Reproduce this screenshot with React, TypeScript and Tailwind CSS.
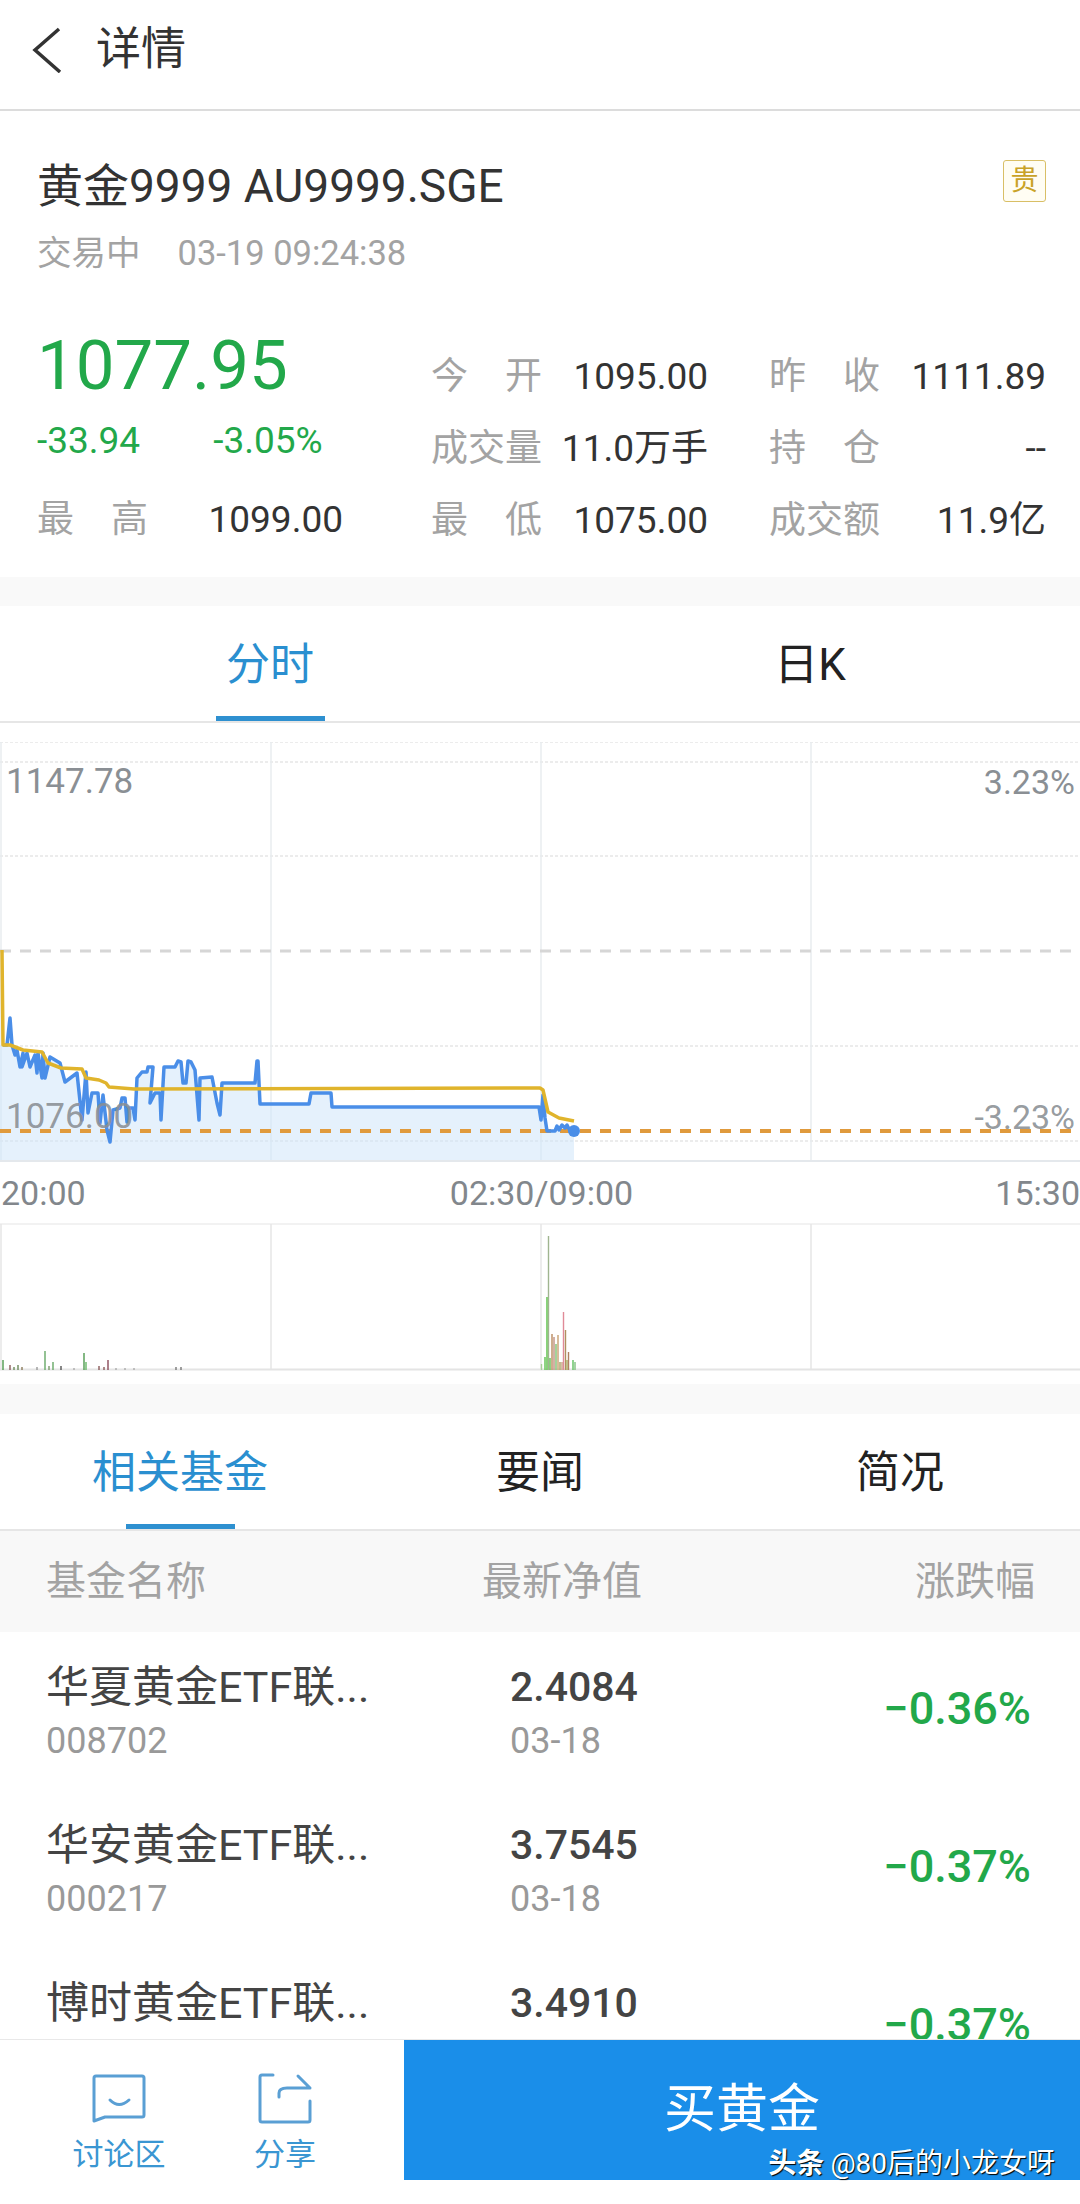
const BLUE: [number, number][] = [
  [3,1045],[7,1045],[10,1018],[12,1045],[15,1055],[17,1050],[20,1067],[23,1053],[22,1067],[27,1053],[30,1067],[35,1055],[37,1073],[38,1053],[42,1078],[43,1053],[45,1078],[50,1057],[60,1063],[65,1082],[77,1073],[82,1120],[86,1072],[88,1113],[92,1093],[98,1093],[100,1123],[103,1095],[107,1130],[110,1142],[113,1110],[120,1108],[122,1098],[125,1098],[127,1122],[128,1108],[133,1108],[135,1120],[137,1078],[142,1072],[147,1072],[148,1067],[153,1067],[150,1103],[155,1093],[160,1093],[161,1120],[164,1067],[175,1067],[178,1061],[181,1062],[183,1083],[186,1083],[188,1061],[191,1062],[195,1070],[199,1120],[200,1078],[212,1077],[217,1103],[220,1115],[222,1083],[255,1083],[257,1061],[258,1061],[260,1104],[309,1104],[311,1093],[331,1093],[332,1107],[539,1107],[541,1120],[543,1095],[545,1118],[547,1131],[555,1131],[557,1126],[559,1130],[562,1125],[565,1128],[567,1125],[570,1131],[574,1131],
];
const YELLOW: [number, number][] = [
  [2,950],[3,1045],[10,1045],[23,1050],[42,1052],[48,1063],[61,1068],[82,1069],[86,1078],[99,1080],[106,1083],[109,1087],[134,1089],[540,1088],[543,1090],[548,1112],[559,1118],[574,1121],
];
const BARS: [number, number, string][] = [
  [3,1360,"#4f9a4f"],[10,1365,"#8a5a5a"],[14,1367,"#6a8a5a"],[18,1365,"#6a8a5a"],[22,1367,"#8a7a5a"],[37,1367,"#999"],[45,1351,"#66a866"],[49,1366,"#7a9a6a"],[53,1362,"#66a866"],[61,1366,"#555"],[74,1368,"#aaa"],[84,1353,"#4f9a4f"],[86,1362,"#66b866"],[99,1366,"#8a5a5a"],[104,1367,"#8a5a5a"],[108,1360,"#8a4a5a"],[116,1368,"#aaa"],[125,1368,"#aaa"],[134,1368,"#aaa"],[176,1367,"#777"],[181,1367,"#777"],
  [541.5,1364,"#a8cf9a"],[545,1357,"#5fc14f"],[547,1297,"#55c040"],[548.5,1236,"#9fb58f"],[550,1358,"#5fc14f"],[552,1334,"#b98a5f"],[554,1337,"#c09080"],[556,1344,"#7fbf6f"],[558,1335,"#c8a070"],[560,1362,"#a8a060"],[562,1362,"#c8a080"],[563.5,1312,"#e08a98"],[565.5,1330,"#b09060"],[567,1360,"#a8b060"],[568.5,1352,"#b08060"],[573,1360,"#60c060"],[575,1362,"#80c080"],
];
const pts = (a: [number, number][]) => a.map((p) => p.join(",")).join(" ");

function Stat({ label, value }: { label: string[]; value: string }) {
  return (
    <div className="flex h-[72px] items-center justify-between">
      <div className="flex w-[111px] justify-between text-[37px] text-[#a3a3a3]">
        {label.map((c, i) => (
          <span key={i}>{c}</span>
        ))}
      </div>
      <span className="text-[37px] text-[#333]">{value}</span>
    </div>
  );
}

function Tab({ label, active, w }: { label: string; active?: boolean; w: string }) {
  return (
    <div className="flex flex-1 justify-center">
      <div
        className={
          w +
          " flex h-[110px] items-center justify-center border-b-[5px] pt-[2px] text-[44px] " +
          (active ? "border-[#2e90d0] text-[#2a8fd0]" : "border-transparent text-[#222]")
        }
      >
        {label}
      </div>
    </div>
  );
}

function FundRow({ name, code, value, date, pct }: { name: string; code: string; value: string; date: string; pct: string }) {
  return (
    <div className="flex h-[158px] shrink-0 pl-[46px] pr-[49px]">
      <div className="flex w-[464px] flex-col pt-[30px]">
        <span className="h-[50px] whitespace-nowrap text-[43px] leading-[50px] text-[#444]">{name}</span>
        <span className="mt-[4px] h-[50px] text-[36px] leading-[50px] text-[#999]">{code}</span>
      </div>
      <div className="flex flex-col pt-[30px]">
        <span className="h-[50px] text-[41px] font-medium leading-[50px] text-[#444]">{value}</span>
        <span className="mt-[4px] h-[50px] text-[36px] leading-[50px] text-[#999]">{date}</span>
      </div>
      <div className="ml-auto pt-[52px] text-[45px] font-medium leading-[50px] text-[#22a84a]">{pct}</div>
    </div>
  );
}

export default function App() {
  return (
    <div className="flex h-[2204px] w-[1080px] flex-col overflow-hidden bg-white font-[Roboto,'Noto_Sans_CJK_SC',sans-serif]">
      <header className="flex h-[111px] shrink-0 items-center gap-[34px] border-b-2 border-[#dcdcdc] pb-[10px] pl-[32px]">
        <svg width="30" height="46" viewBox="0 0 30 46" fill="none" stroke="#333" strokeWidth="3.5">
          <path d="M27 2 L3 23 L28 45" />
        </svg>
        <h1 className="text-[45px] leading-none text-[#333]">详情</h1>
      </header>

      <section className="shrink-0 pb-[20px] pl-[37px] pr-[34px] pt-[50px]">
        <div className="flex h-[50px] items-start justify-between">
          <span className="text-[46px] leading-[50px] text-[#333]">黄金9999 AU9999.SGE</span>
          <span className="-mt-px flex h-[42px] w-[43px] items-center justify-center rounded-[3px] border border-[#d9bf66] bg-[#fffdf3] text-[28px] leading-none text-[#c9a227]">
            贵
          </span>
        </div>
        <div className="mt-[23px] flex h-[40px] items-center gap-[37px] text-[34.5px] text-[#a3a3a3]">
          <span>交易中</span>
          <span>03-19 09:24:38</span>
        </div>
        <div className="mt-[67px] flex">
          <div className="-mt-[11px] flex w-[306px] shrink-0 flex-col">
            <div className="h-[72px] text-[69px] font-normal leading-[72px] text-[#22a84a]">1077.95</div>
            <div className="mt-[19px] flex h-[40px] items-center gap-[73px] text-[37px] text-[#22a84a]">
              <span>-33.94</span>
              <span>-3.05%</span>
            </div>
            <div className="mt-[23px]">
              <Stat label={["最", "高"]} value="1099.00" />
            </div>
          </div>
          <div className="ml-[88px] w-[277px] shrink-0">
            <Stat label={["今", "开"]} value="1095.00" />
            <Stat label={["成", "交", "量"]} value="11.0万手" />
            <Stat label={["最", "低"]} value="1075.00" />
          </div>
          <div className="ml-[61px] w-[277px] shrink-0">
            <Stat label={["昨", "收"]} value="1111.89" />
            <Stat label={["持", "仓"]} value="--" />
            <Stat label={["成", "交", "额"]} value="11.9亿" />
          </div>
        </div>
      </section>

      <div className="h-[29px] shrink-0 bg-[#f9f9f9]" />

      <nav className="flex h-[117px] shrink-0 items-end border-b-2 border-[#e6e6e6] pb-0">
        <Tab label="分时" active w="w-[109px]" />
        <Tab label="日K" w="w-[109px]" />
      </nav>

      <div className="relative mt-[19px] h-[422px] shrink-0">
        <svg width="1080" height="422" viewBox="0 742 1080 422" className="block">
          {[742, 762, 856, 1046, 1141].map((y) => (
            <line key={y} x1="0" x2="1080" y1={y} y2={y} stroke="#e6e6e6" strokeWidth="1.5" strokeDasharray="3 2" />
          ))}
          {[1, 271, 541, 811].map((x) => (
            <line key={x} x1={x} x2={x} y1="742" y2="1160" stroke="#e8ecef" strokeWidth="1.5" />
          ))}
          <line x1="0" x2="1080" y1="951" y2="951" stroke="#d6d6d6" strokeWidth="3" strokeDasharray="11 9" />
          <polygon points={`0,1045 ${pts(BLUE)} 574,1160 0,1160`} fill="#cfe6fa" fillOpacity="0.55" />
          <line x1="0" x2="1080" y1="1131" y2="1131" stroke="#e09a3c" strokeWidth="4" strokeDasharray="11 9" />
          <polyline points={pts(BLUE)} fill="none" stroke="#4a8ee8" strokeWidth="3.5" strokeLinejoin="round" />
          <polyline points={pts(YELLOW)} fill="none" stroke="#e0b42c" strokeWidth="3.5" strokeLinejoin="round" />
          <circle cx="574" cy="1131" r="6" fill="#4a8ee8" />
          <line x1="0" x2="1080" y1="1161" y2="1161" stroke="#e4e8ec" strokeWidth="2" />
        </svg>
        <span className="absolute left-[6px] top-[20px] text-[35px] leading-[40px] text-[#8a8f94]">1147.78</span>
        <span className="absolute right-[5px] top-[20px] text-[34px] leading-[40px] text-[#8a8f94]">3.23%</span>
        <span className="absolute left-[6px] top-[355px] text-[35px] leading-[40px] text-[#8a8f94]/90">1076.00</span>
        <span className="absolute right-[5px] top-[355px] text-[34px] leading-[40px] text-[#8a8f94]/90">-3.23%</span>
      </div>

      <div className="flex h-[59px] shrink-0 items-center justify-between pb-[2px] text-[34px] leading-none text-[#82878c]">
        <span className="pl-px">20:00</span>
        <span className="pl-[2px]">02:30/09:00</span>
        <span>15:30</span>
      </div>

      <div className="h-[161px] shrink-0">
        <svg width="1080" height="150" viewBox="0 1223 1080 150" className="block">
          <line x1="0" x2="1080" y1="1224" y2="1224" stroke="#eeeeee" strokeWidth="1.5" />
          {[1, 271, 541, 811].map((x) => (
            <line key={x} x1={x} x2={x} y1="1224" y2="1369" stroke="#e6e6e6" strokeWidth="1.5" />
          ))}
          <line x1="0" x2="1080" y1="1369.5" y2="1369.5" stroke="#e4e4e4" strokeWidth="2" />
          {BARS.map(([x, y, c], i) => (
            <line key={i} x1={x} x2={x} y1={y} y2="1370" stroke={c} strokeWidth="1.4" />
          ))}
        </svg>
      </div>

      <div className="h-[30px] shrink-0 bg-[#f9f9f9]" />

      <nav className="flex h-[117px] shrink-0 items-end border-b-2 border-[#e6e6e6]">
        <Tab label="相关基金" active w="w-[109px] whitespace-nowrap" />
        <Tab label="要闻" w="w-[109px]" />
        <Tab label="简况" w="w-[109px]" />
      </nav>

      <div className="flex h-[101px] shrink-0 items-center bg-[#f8f8f8] pl-[46px] pr-[45px] text-[40px] text-[#a3a3a3]">
        <span className="w-[436px]">基金名称</span>
        <span>最新净值</span>
        <span className="ml-auto">涨跌幅</span>
      </div>

      <div className="flex min-h-0 flex-1 flex-col overflow-hidden">
        <FundRow name="华夏黄金ETF联..." code="008702" value="2.4084" date="03-18" pct="−0.36%" />
        <FundRow name="华安黄金ETF联..." code="000217" value="3.7545" date="03-18" pct="−0.37%" />
        <FundRow name="博时黄金ETF联..." code="" value="3.4910" date="" pct="−0.37%" />
      </div>

      <footer className="flex h-[165px] shrink-0 border-t border-[#e8e8e8] bg-white">
        <div className="flex w-[404px] pl-[36px]">
          <button className="flex w-[166px] flex-col items-center pt-[33px]">
            <svg width="56" height="52" viewBox="0 0 56 52" fill="none" stroke="#5a9fd4" strokeWidth="3" strokeLinejoin="round">
              <path d="M5 3 H51 a2 2 0 0 1 2 2 V42 a2 2 0 0 1 -2 2 H14 L3 48 V5 a2 2 0 0 1 2 -2 Z" />
              <path d="M19 27 Q28 36 38 27" strokeLinecap="round" />
            </svg>
            <span className="mt-[12px] text-[31px] leading-[36px] text-[#3a96d2]">讨论区</span>
          </button>
          <button className="flex w-[166px] flex-col items-center pt-[33px]">
            <svg width="56" height="52" viewBox="0 0 56 52" fill="none" stroke="#5a9fd4" strokeWidth="3" strokeLinejoin="round" strokeLinecap="round">
              <path d="M16 2 H5 a2 2 0 0 0 -2 2 V47 a2 2 0 0 0 2 2 H51 a2 2 0 0 0 2 -2 V28" />
              <path d="M22 24 V20 Q22 15 30 15 H53 L41 3" />
            </svg>
            <span className="mt-[12px] text-[31px] leading-[36px] text-[#3a96d2]">分享</span>
          </button>
        </div>
        <button className="relative flex h-[140px] flex-1 items-center justify-center bg-[#1a8ee9] text-[52px] text-white">
          买黄金
          <span className="absolute bottom-[-4px] right-[25px] flex items-baseline gap-[6px] whitespace-nowrap text-[28px] leading-[40px] text-white [text-shadow:1px_1px_1px_#000]">
            <b className="font-bold">头条</b>
            <span>@80后的小龙女呀</span>
          </span>
        </button>
      </footer>
    </div>
  );
}
